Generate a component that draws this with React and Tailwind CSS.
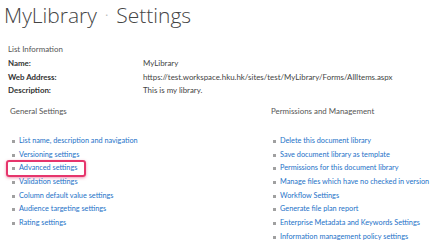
const general = [
  "List name, description and navigation",
  "Versioning settings",
  "Advanced settings",
  "Validation settings",
  "Column default value settings",
  "Audience targeting settings",
  "Rating settings",
]

const permissions = [
  "Delete this document library",
  "Save document library as template",
  "Permissions for this document library",
  "Manage files which have no checked in version",
  "Workflow Settings",
  "Generate file plan report",
  "Enterprise Metadata and Keywords Settings",
  "Information management policy settings",
]

function LinkItem({ label, highlight }) {
  return (
    <li className="relative flex items-center h-[13.7px]">
      <span className="w-[3px] h-[3px] bg-[#a0a0a0] mr-[4px] shrink-0" />
      <a className="text-[#2472c8] whitespace-nowrap">{label}</a>
      {highlight && (
        <span className="absolute left-[-6px] top-[-2px] w-[80px] h-[17px] rounded-[3px] border-2 border-[#e6356c] shadow-[0_1px_3px_rgba(230,53,108,0.5)]" />
      )}
    </li>
  )
}

export default function App() {
  return (
    <div
      className="w-[438px] h-[252px] bg-white overflow-hidden text-[7.9px] text-[#444]"
      style={{ fontFamily: 'Lato, "Open Sans", sans-serif' }}
    >
      <h1
        className="flex items-center pl-[4px] pt-[1px] h-[30px] text-[21px] font-light text-[#444] leading-none"
        style={{ fontFamily: '"Open Sans", Lato, sans-serif' }}
      >
        <span>MyLibrary</span>
        <span className="mx-[8px] text-[9px] text-[#bbb]">•</span>
        <span>Settings</span>
      </h1>

      <section className="pl-[8px] pt-[12px]">
        <div className="text-[#555] h-[14px] leading-[14px]">List Information</div>
        <div className="mt-[1px] grid grid-cols-[135px_1fr] leading-[13.5px]">
          <div className="font-bold text-[#333]">Name:</div>
          <div>MyLibrary</div>
          <div className="font-bold text-[#333]">Web Address:</div>
          <div className="whitespace-nowrap">https://test.workspace.hku.hk/sites/test/MyLibrary/Forms/AllItems.aspx</div>
          <div className="font-bold text-[#333]">Description:</div>
          <div>This is my library.</div>
        </div>
      </section>

      <div className="flex pt-[6px] text-[7.3px]">
        <div className="w-[271px] shrink-0 pl-[10px]">
          <div className="text-[#555] text-[7.9px] h-[14px] leading-[14px]">General Settings</div>
          <ul className="pl-[2px] pt-[17px]">
            {general.map((g) => (
              <LinkItem key={g} label={g} highlight={g === "Advanced settings"} />
            ))}
          </ul>
        </div>
        <div>
          <div className="text-[#555] text-[7.9px] h-[14px] leading-[14px]">Permissions and Management</div>
          <ul className="pl-[2px] pt-[17px]">
            {permissions.map((p) => (
              <LinkItem key={p} label={p} />
            ))}
          </ul>
        </div>
      </div>
    </div>
  )
}
